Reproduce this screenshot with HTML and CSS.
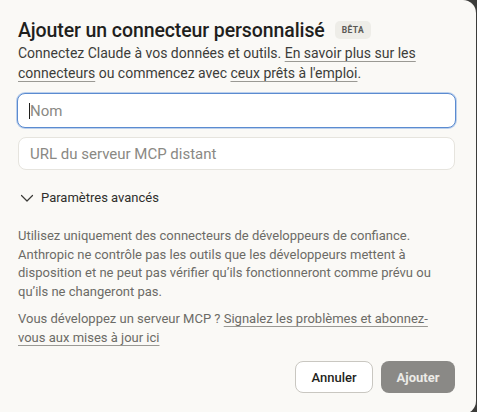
FILE: index.html
```html
<!DOCTYPE html>
<html lang="fr">
<head>
<meta charset="utf-8">
<link rel="stylesheet" href="styles.css">
</head>
<body>
<div class="dialog">
  <div class="header">
    <h1 class="title">Ajouter un connecteur personnalisé</h1>
    <span class="badge">BÊTA</span>
  </div>
  <p class="intro">Connectez Claude à vos données et outils. <a href="#" class="link">En savoir plus sur les connecteurs</a> ou commencez avec <a href="#" class="link">ceux prêts à l'emploi</a>.</p>
  <div class="fields">
    <div class="input focused"><span class="caret"></span><span class="placeholder">Nom</span></div>
    <div class="input"><span class="placeholder">URL du serveur MCP distant</span></div>
  </div>
  <div class="advanced">
    <svg class="chevron" width="14" height="14" viewBox="0 0 14 14"><path d="M1.5 4.5 L7 10 L12.5 4.5" fill="none" stroke="#3a3a37" stroke-width="1.2" stroke-linecap="round" stroke-linejoin="round"/></svg>
    <span>Paramètres avancés</span>
  </div>
  <p class="note">Utilisez uniquement des connecteurs de développeurs de confiance. Anthropic ne contrôle pas les outils que les développeurs mettent à disposition et ne peut pas vérifier qu’ils fonctionneront comme prévu ou qu’ils ne changeront pas.</p>
  <p class="note second">Vous développez un serveur MCP ? <a href="#" class="link">Signalez les problèmes et abonnez-vous aux mises à jour ici</a></p>
  <div class="actions">
    <button class="btn cancel">Annuler</button>
    <button class="btn primary">Ajouter</button>
  </div>
</div>
</body>
</html>
```
FILE: styles.css
```css
html, body {
  margin: 0;
  padding: 0;
  background: #3c3c3a;
  width: 477px;
  height: 412px;
  overflow: hidden;
}
.dialog {
  box-sizing: border-box;
  width: 476px;
  height: 414px;
  background: #faf9f6;
  border-radius: 0 13px 13px 0;
  padding: 18px 21px 0 18px;
  font-family: Roboto, "Liberation Sans", sans-serif;
  color: #3d3d3a;
}
.header {
  display: flex;
  align-items: center;
  gap: 10px;
  height: 22px;
  margin-top: 1px;
}
.title {
  margin: 0;
  font-size: 19.5px;
  font-weight: 500;
  color: #1f1f1d;
  letter-spacing: -0.1px;
}
.badge {
  font-size: 8.5px;
  font-weight: 700;
  color: #5a5955;
  background: #eeede8;
  border-radius: 5px;
  padding: 4px 7px;
  letter-spacing: 0.4px;
  line-height: 10px;
}
.intro {
  margin: 3px 0 0;
  font-size: 14px;
  line-height: 19.5px;
  color: #3d3d3a;
}
.link {
  color: inherit;
  text-decoration: underline;
  text-decoration-color: #9a9994;
  text-underline-offset: 3px;
  text-decoration-thickness: 1px;
}
.fields {
  margin-top: 10px;
  display: flex;
  flex-direction: column;
  gap: 9px;
}
.input {
  box-sizing: border-box;
  height: 33px;
  background: #ffffff;
  border: 1px solid #e6e4de;
  border-radius: 8px;
  display: flex;
  align-items: center;
  padding: 0 11px;
  font-size: 15px;
}
.input.focused {
  height: 35px;
  margin: 0 -1px;
  border: 1px solid #5b8bd0;
  box-shadow: 0 0 0 1px #bcd0ec;
}
.caret {
  width: 1px;
  height: 16px;
  background: #1f1f1d;
}
.placeholder {
  color: #8a8984;
}
.advanced {
  margin-top: 20px;
  display: flex;
  align-items: center;
  gap: 7px;
  font-size: 13px;
  color: #2f2f2c;
  padding-left: 2px;
}
.note {
  margin: 22px 0 0;
  font-size: 13px;
  line-height: 18.5px;
  color: #6c6b66;
}
.note.second {
  margin-top: 9px;
}
.actions {
  margin-top: 14px;
  display: flex;
  justify-content: flex-end;
  gap: 8px;
}
.btn {
  box-sizing: border-box;
  height: 32px;
  border-radius: 8px;
  font-family: Roboto, "Liberation Sans", sans-serif;
  font-size: 13px;
  font-weight: 500;
  padding: 0 15px;
}
.cancel {
  width: 78px;
  background: #ffffff;
  border: 1px solid #c9c7c1;
  color: #1f1f1d;
}
.primary {
  width: 74px;
  background: #8a8986;
  border: none;
  color: #ecebe7;
  font-weight: 700;
}
```
